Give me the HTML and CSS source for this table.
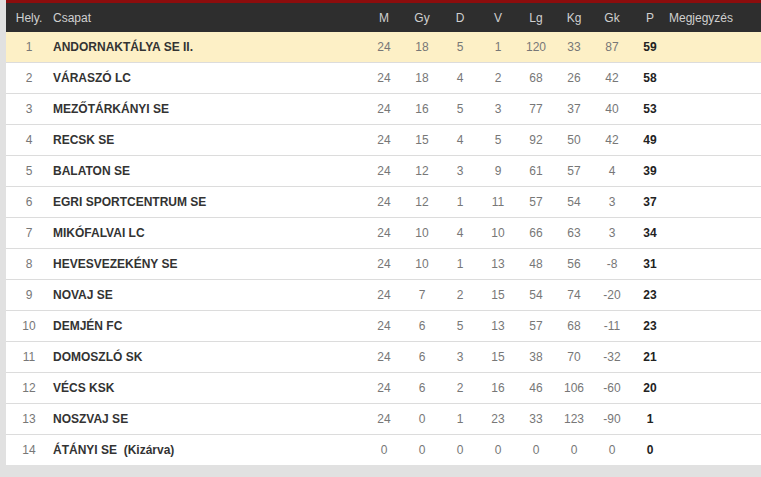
FILE: index.html
```html
<!DOCTYPE html>
<html lang="hu">
<head>
<meta charset="utf-8">
<title>Tabella</title>
<link rel="stylesheet" href="styles.css">
</head>
<body>
<div class="page">
<table class="standings">
<colgroup>
<col class="c-pos"><col class="c-team">
<col class="c-num"><col class="c-num"><col class="c-num"><col class="c-num">
<col class="c-num"><col class="c-num"><col class="c-num"><col class="c-num">
<col class="c-note">
</colgroup>
<thead>
<tr><th class="pos">Hely.</th><th class="team">Csapat</th><th>M</th><th>Gy</th><th>D</th><th>V</th><th>Lg</th><th>Kg</th><th>Gk</th><th>P</th><th class="note">Megjegyzés</th></tr>
</thead>
<tbody>
<tr class="hl"><td class="pos">1</td><td class="team">ANDORNAKTÁLYA SE II.</td><td>24</td><td>18</td><td>5</td><td>1</td><td>120</td><td>33</td><td>87</td><td class="pts">59</td><td class="note"></td></tr>
<tr><td class="pos">2</td><td class="team">VÁRASZÓ LC</td><td>24</td><td>18</td><td>4</td><td>2</td><td>68</td><td>26</td><td>42</td><td class="pts">58</td><td class="note"></td></tr>
<tr><td class="pos">3</td><td class="team">MEZŐTÁRKÁNYI SE</td><td>24</td><td>16</td><td>5</td><td>3</td><td>77</td><td>37</td><td>40</td><td class="pts">53</td><td class="note"></td></tr>
<tr><td class="pos">4</td><td class="team">RECSK SE</td><td>24</td><td>15</td><td>4</td><td>5</td><td>92</td><td>50</td><td>42</td><td class="pts">49</td><td class="note"></td></tr>
<tr><td class="pos">5</td><td class="team">BALATON SE</td><td>24</td><td>12</td><td>3</td><td>9</td><td>61</td><td>57</td><td>4</td><td class="pts">39</td><td class="note"></td></tr>
<tr><td class="pos">6</td><td class="team">EGRI SPORTCENTRUM SE</td><td>24</td><td>12</td><td>1</td><td>11</td><td>57</td><td>54</td><td>3</td><td class="pts">37</td><td class="note"></td></tr>
<tr><td class="pos">7</td><td class="team">MIKÓFALVAI LC</td><td>24</td><td>10</td><td>4</td><td>10</td><td>66</td><td>63</td><td>3</td><td class="pts">34</td><td class="note"></td></tr>
<tr><td class="pos">8</td><td class="team">HEVESVEZEKÉNY SE</td><td>24</td><td>10</td><td>1</td><td>13</td><td>48</td><td>56</td><td>-8</td><td class="pts">31</td><td class="note"></td></tr>
<tr><td class="pos">9</td><td class="team">NOVAJ SE</td><td>24</td><td>7</td><td>2</td><td>15</td><td>54</td><td>74</td><td>-20</td><td class="pts">23</td><td class="note"></td></tr>
<tr><td class="pos">10</td><td class="team">DEMJÉN FC</td><td>24</td><td>6</td><td>5</td><td>13</td><td>57</td><td>68</td><td>-11</td><td class="pts">23</td><td class="note"></td></tr>
<tr><td class="pos">11</td><td class="team">DOMOSZLÓ SK</td><td>24</td><td>6</td><td>3</td><td>15</td><td>38</td><td>70</td><td>-32</td><td class="pts">21</td><td class="note"></td></tr>
<tr><td class="pos">12</td><td class="team">VÉCS KSK</td><td>24</td><td>6</td><td>2</td><td>16</td><td>46</td><td>106</td><td>-60</td><td class="pts">20</td><td class="note"></td></tr>
<tr><td class="pos">13</td><td class="team">NOSZVAJ SE</td><td>24</td><td>0</td><td>1</td><td>23</td><td>33</td><td>123</td><td>-90</td><td class="pts">1</td><td class="note"></td></tr>
<tr><td class="pos">14</td><td class="team">ÁTÁNYI SE&nbsp; (Kizárva)</td><td>0</td><td>0</td><td>0</td><td>0</td><td>0</td><td>0</td><td>0</td><td class="pts">0</td><td class="note"></td></tr>
</tbody>
</table>
</div>
</body>
</html>
```
FILE: styles.css
```css
html, body {
  margin: 0;
  padding: 0;
  background: #e1e1e1;
}
.page {
  padding-left: 6px;
  font-family: "Liberation Sans", Arial, sans-serif;
  font-size: 12px;
}
.standings {
  width: 755px;
  border-collapse: collapse;
  table-layout: fixed;
  background: #fff;
}
.c-pos { width: 46px; }
.c-team { width: 313px; }
.c-num { width: 38px; }
.c-note { width: 92px; }
.standings thead tr {
  background: #2e2e2e;
  border-top: 3px solid #8c0d0d;
}
.standings th {
  height: 29px;
  padding: 0;
  color: #d0d0d0;
  font-weight: normal;
  text-align: center;
  vertical-align: middle;
}
.standings td {
  height: 30px;
  padding: 0;
  color: #777;
  text-align: center;
  vertical-align: middle;
  border-bottom: 1px solid #dcdcdc;
}
.standings tbody tr:last-child td {
  border-bottom: none;
}
.standings .team {
  text-align: left;
  padding-left: 1px;
  color: #333;
  font-weight: bold;
}
.standings th.team {
  color: #d0d0d0;
  font-weight: normal;
}
.standings .note {
  text-align: left;
  padding-left: 0;
}
.standings .pts {
  color: #222;
  font-weight: bold;
}
.standings tr.hl td {
  background: #fdf0c6;
}
```
